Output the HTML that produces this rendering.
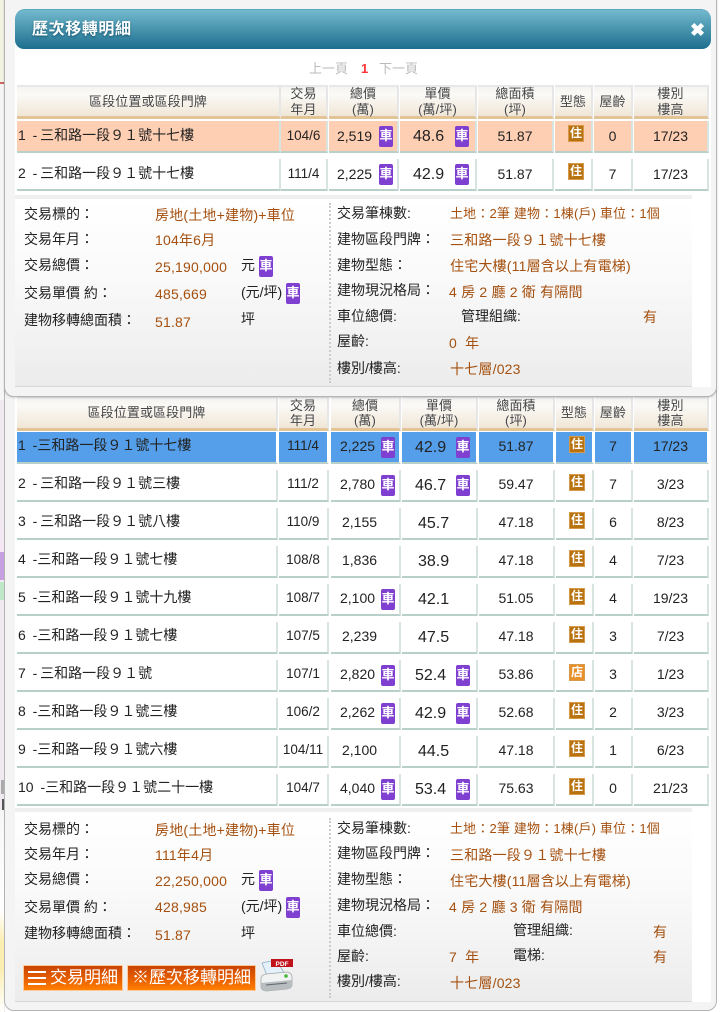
<!DOCTYPE html>
<html lang="zh-TW"><head><meta charset="utf-8"><title>歷次移轉明細</title>
<style>
*{box-sizing:border-box;margin:0;padding:0}
html,body{width:720px;height:1012px;overflow:hidden;background:#fff}
body{position:relative;font-family:"Liberation Sans","Noto Sans CJK TC",sans-serif;font-size:14px;color:#222}
.a{position:absolute;white-space:nowrap}
.dlg{position:absolute;background:#f4f4f4;border:1.5px solid #b4b4b4;border-radius:10px}
.w{position:absolute;background:#fff}
.hc,.c{position:absolute;white-space:nowrap;text-align:center}
.hc{top:0;height:100%;font-size:13px;line-height:15.5px;letter-spacing:.1px;color:#444;background:linear-gradient(#f3f3f1,#fbfaf7 25%,#f0e6d6);border-top:2px solid #e8e8e8;border-right:2px solid #e6e6e6;border-bottom:3px solid #e2c497;display:flex;align-items:center;justify-content:center;text-shadow:0 0 1px #fff}
.r{position:absolute;left:0;width:720px;height:32px}
.c{top:0;height:32px;line-height:30px;border-right:2px solid #d8e4e1;border-bottom:2px solid #b9d0ca}
.c1{text-align:left;padding-left:1px;word-spacing:3px}
.c2{font-size:13.5px}
.c3,.c4{text-align:left}
.or .c{background:#ffcfb3}
.bl .c{background:#559fea;border-right-color:#fff;border-bottom-color:#b9d0ca;color:#222}
.b{position:absolute;top:5px;width:14px;height:21px;background:#7f3fd0;color:#fff;border-radius:2px;font-size:13px;line-height:20px;text-align:center;font-weight:bold;word-spacing:0}
.h{position:absolute;top:4px;left:13px;width:16px;height:17px;background:#b8720f;color:#fff;border:1px solid #d59a4a;font-size:12px;line-height:15px;text-align:center;font-weight:bold}
.s{background:#e8902a}
.t1 .c1,.t1 .h1{left:17px;width:264px}.t1 .c2,.t1 .h2{left:281px;width:47px}.t1 .c3,.t1 .h3{left:329px;width:70px}.t1 .c4,.t1 .h4{left:400px;width:77px}.t1 .c5,.t1 .h5{left:478px;width:76px}.t1 .c6,.t1 .h6{left:555px;width:38px}.t1 .c7,.t1 .h7{left:594px;width:39px}.t1 .c8,.t1 .h8{left:634px;width:75px}
.t2 .c1,.t2 .h1{left:17px;width:261px}.t2 .c2,.t2 .h2{left:279px;width:50px}.t2 .c3,.t2 .h3{left:331px;width:70px}.t2 .c4,.t2 .h4{left:402px;width:76px}.t2 .c5,.t2 .h5{left:479px;width:76px}.t2 .c6,.t2 .h6{left:556px;width:38px}.t2 .c7,.t2 .h7{left:595px;width:38px}.t2 .c8,.t2 .h8{left:634px;width:75px}
.t1 .c3{padding-left:8px}.t1 .c4{padding-left:13px}
.t2 .c3{padding-left:9px}.t2 .c4{padding-left:13px}
.t1 .c3 .b{left:50px}.t1 .c4 .b{left:55px}
.t2 .c3 .b{left:50px}.t2 .c4 .b{left:54px}
.t2 .c3.n{padding-left:11px}.t2 .c4.n{padding-left:16px}
.t1 .c1{line-height:28px}
.t2 .c{line-height:28px}
.t2 .c1{line-height:27px}
.t1 .p,.t2 .p{font-size:16px;line-height:32px}
.det{position:absolute;left:15px;width:677px;background:linear-gradient(#fff,#fafafa 40%,#ececec);border-bottom:1px solid #d8d8d8}
.str{position:absolute;left:15px;width:677px;height:4px;background:#efefef}
.dot{position:absolute;left:329px;width:0;border-left:2px dotted #ccc}
.l{position:absolute;white-space:nowrap;line-height:20px;color:#222}
.v{position:absolute;white-space:nowrap;line-height:20px;color:#a5500f;letter-spacing:.2px}
.db{position:absolute;width:14px;height:21px;background:#7f3fd0;color:#fff;border-radius:2px;font-size:13px;line-height:20px;text-align:center;font-weight:bold}
.btn{position:absolute;top:965px;height:26px;background:linear-gradient(#c94500,#e85f00 55%,#ff8000);border:1px solid #ffc999;color:#fff;font-size:17px;line-height:24px;white-space:nowrap;text-align:center}
</style></head><body>
<!-- page background slivers -->
<div class="a" style="left:0;top:0;width:5px;height:1012px;background:#f0eaf0"></div>
<div class="a" style="left:0;top:0;width:5px;height:82px;background:#f3f3e4"></div>
<div class="a" style="left:0;top:82px;width:5px;height:2px;background:#c66"></div>
<div class="a" style="left:0;top:84px;width:5px;height:316px;background:#f6f6f6"></div>
<div class="a" style="left:0;top:510px;width:4px;height:42px;background:linear-gradient(#f0eaf0,#f6e6f6)"></div>
<div class="a" style="left:0;top:552px;width:4px;height:28px;background:#c6a0e0"></div>
<div class="a" style="left:0;top:582px;width:4px;height:18px;background:#bfe8c8"></div>
<div class="a" style="left:1px;top:780px;width:3px;height:14px;background:#aaa"></div>
<div class="a" style="left:2px;top:799px;width:2px;height:11px;background:#555"></div>
<div class="a" style="left:0;top:810px;width:4px;height:202px;background:linear-gradient(#f6f6f6,#fff 50%,#fbeeb0 65%,#fbeeb0 78%,#fff)"></div>
<!-- lower dialog -->
<div class="dlg" style="left:4px;top:380px;width:713px;height:631px"></div>
<div class="w" style="left:15px;top:397px;width:696px;height:605px"></div>
<div class="t2">
<div class="a" style="left:0;top:396px;width:720px;height:35px">
<div class="hc h1">區段位置或區段門牌</div><div class="hc h2">交易<br>年月</div><div class="hc h3">總價<br>(萬)</div><div class="hc h4">單價<br>(萬/坪)</div><div class="hc h5">總面積<br>(坪)</div><div class="hc h6">型態</div><div class="hc h7">屋齡</div><div class="hc h8">樓別<br>樓高</div>
</div>
<div class="r bl" style="top:432px"><div class="c c1">1 -三和路一段９１號十七樓</div><div class="c c2">111/4</div><div class="c c3">2,225<span class="b">車</span></div><div class="c c4 p">42.9<span class="b">車</span></div><div class="c c5">51.87</div><div class="c c6"><span class="h">住</span></div><div class="c c7">7</div><div class="c c8">17/23</div></div>
<div class="r" style="top:470px"><div class="c c1">2 -&#8201;三和路一段９１號三樓</div><div class="c c2">111/2</div><div class="c c3">2,780<span class="b">車</span></div><div class="c c4 p">46.7<span class="b">車</span></div><div class="c c5">59.47</div><div class="c c6"><span class="h">住</span></div><div class="c c7">7</div><div class="c c8">3/23</div></div>
<div class="r" style="top:508px"><div class="c c1">3 -&#8201;三和路一段９１號八樓</div><div class="c c2">110/9</div><div class="c c3 n">2,155</div><div class="c c4 p n">45.7</div><div class="c c5">47.18</div><div class="c c6"><span class="h">住</span></div><div class="c c7">6</div><div class="c c8">8/23</div></div>
<div class="r" style="top:546px"><div class="c c1">4 -三和路一段９１號七樓</div><div class="c c2">108/8</div><div class="c c3 n">1,836</div><div class="c c4 p n">38.9</div><div class="c c5">47.18</div><div class="c c6"><span class="h">住</span></div><div class="c c7">4</div><div class="c c8">7/23</div></div>
<div class="r" style="top:584px"><div class="c c1">5 -三和路一段９１號十九樓</div><div class="c c2">108/7</div><div class="c c3">2,100<span class="b">車</span></div><div class="c c4 p n">42.1</div><div class="c c5">51.05</div><div class="c c6"><span class="h">住</span></div><div class="c c7">4</div><div class="c c8">19/23</div></div>
<div class="r" style="top:622px"><div class="c c1">6 -三和路一段９１號七樓</div><div class="c c2">107/5</div><div class="c c3 n">2,239</div><div class="c c4 p n">47.5</div><div class="c c5">47.18</div><div class="c c6"><span class="h">住</span></div><div class="c c7">3</div><div class="c c8">7/23</div></div>
<div class="r" style="top:660px"><div class="c c1">7 -&#8201;三和路一段９１號</div><div class="c c2">107/1</div><div class="c c3">2,820<span class="b">車</span></div><div class="c c4 p">52.4<span class="b">車</span></div><div class="c c5">53.86</div><div class="c c6"><span class="h s">店</span></div><div class="c c7">3</div><div class="c c8">1/23</div></div>
<div class="r" style="top:698px"><div class="c c1">8 -三和路一段９１號三樓</div><div class="c c2">106/2</div><div class="c c3">2,262<span class="b">車</span></div><div class="c c4 p">42.9<span class="b">車</span></div><div class="c c5">52.68</div><div class="c c6"><span class="h">住</span></div><div class="c c7">2</div><div class="c c8">3/23</div></div>
<div class="r" style="top:736px"><div class="c c1">9 -三和路一段９１號六樓</div><div class="c c2">104/11</div><div class="c c3 n">2,100</div><div class="c c4 p n">44.5</div><div class="c c5">47.18</div><div class="c c6"><span class="h">住</span></div><div class="c c7">1</div><div class="c c8">6/23</div></div>
<div class="r" style="top:774px"><div class="c c1">10 -三和路一段９１號二十一樓</div><div class="c c2">104/7</div><div class="c c3">4,040<span class="b">車</span></div><div class="c c4 p">53.4<span class="b">車</span></div><div class="c c5">75.63</div><div class="c c6"><span class="h">住</span></div><div class="c c7">0</div><div class="c c8">21/23</div></div>
</div>
<div class="str" style="top:808px"></div>
<div class="det" style="top:812px;height:190px"></div>
<div class="dot" style="top:818px;height:180px"></div>
<div class="l" style="left:24px;top:819px">交易標的：</div><div class="v" style="left:155px;top:820px">房地(土地+建物)+車位</div>
<div class="l" style="left:24px;top:844px">交易年月：</div><div class="v" style="left:155px;top:845px">111年4月</div>
<div class="l" style="left:24px;top:869px">交易總價：</div><div class="v" style="left:155px;top:871px">22,250,000</div><div class="l" style="left:241px;top:869px">元</div><div class="db" style="left:259px;top:870px">車</div>
<div class="l" style="left:24px;top:897px">交易單價 約：</div><div class="v" style="left:155px;top:897px">428,985</div><div class="l" style="left:241px;top:896px">(元/坪)</div><div class="db" style="left:286px;top:897px">車</div>
<div class="l" style="left:24px;top:923px">建物移轉總面積：</div><div class="v" style="left:155px;top:925px">51.87</div><div class="l" style="left:241px;top:923px">坪</div>
<div class="btn" style="left:23px;width:100px"><span style="display:inline-block;width:18px;height:14px;margin-right:4px;vertical-align:-2px;background:repeating-linear-gradient(#fff 0 2px,transparent 2px 6px)"></span>交易明細</div>
<div class="btn" style="left:127px;width:129px">※歷次移轉明細</div>
<svg class="a" style="left:259px;top:958px" width="36" height="35" viewBox="0 0 36 35">
<path d="M3 5 L17 2 L26 16 L9 20 Z" fill="#e4f1fa" stroke="#8fb0c4" stroke-width=".8"/>
<rect x="12" y="1" width="22" height="8" fill="#c1121c"/><text x="23" y="8" font-size="6.5" font-weight="bold" fill="#fff" text-anchor="middle" font-family="Liberation Sans">PDF</text>
<path d="M2 21 Q2 17 7 16 L28 14 Q33 15 33 19 L33 27 Q33 30 28 31 L8 33 Q2 33 2 28 Z" fill="#f1f2f2" stroke="#a0a6a8" stroke-width=".8"/>
<path d="M2 25 L33 22 L33 27 Q33 30 28 31 L8 33 Q2 33 2 28 Z" fill="#b8bdc0"/>
<path d="M7 27 L28 25" stroke="#60666a" stroke-width="1"/>
<circle cx="27" cy="18" r="1.8" fill="#46b83c"/>
</svg>
<div class="l" style="left:337px;top:818px">交易筆棟數:</div><div class="v" style="left:450px;top:819px;font-size:13px;letter-spacing:.17px">土地：2筆 建物：1棟(戶) 車位：1個</div>
<div class="l" style="left:337px;top:843px">建物區段門牌：</div><div class="v" style="left:450px;top:845px">三和路一段９１號十七樓</div>
<div class="l" style="left:337px;top:869px">建物型態：</div><div class="v" style="left:450px;top:871px">住宅大樓(11層含以上有電梯)</div>
<div class="l" style="left:337px;top:895px">建物現況格局：</div><div class="v" style="left:449px;top:897px">4 房 2 廳 3 衛 有隔間</div>
<div class="l" style="left:337px;top:921px">車位總價:</div><div class="l" style="left:513px;top:920px">管理組織:</div><div class="v" style="left:653px;top:922px">有</div>
<div class="l" style="left:337px;top:946px">屋齡:</div><div class="v" style="left:449px;top:947px">7 &nbsp;年</div><div class="l" style="left:513px;top:945px">電梯:</div><div class="v" style="left:653px;top:947px">有</div>
<div class="l" style="left:337px;top:971px">樓別/樓高:</div><div class="v" style="left:450px;top:973px">十七層/023</div>
<!-- upper dialog -->
<div class="dlg" style="left:4px;top:-12px;width:713px;height:409px;box-shadow:0 1px 2px rgba(0,0,0,.15)"></div>
<div class="w" style="left:15px;top:40px;width:696px;height:347px"></div>
<div class="a" style="left:15px;top:9px;width:696px;height:40px;border-radius:10px 10px 9px 9px;background:linear-gradient(#72b9cd,#1d6e8e);border-top:1px solid #5aa6bc"></div>
<div class="a" style="left:32px;top:19px;font-size:16px;line-height:22px;font-weight:bold;color:#fff;text-shadow:0 1px 2px #14566f;letter-spacing:.6px">歷次移轉明細</div>
<div class="a" style="left:690px;top:18px;font-size:18px;line-height:24px;font-weight:bold;color:#fff">✖</div>
<div class="a" style="left:309px;top:59px;font-size:13px;line-height:20px;color:#bbb">上一頁</div>
<div class="a" style="left:361px;top:59px;font-size:13px;line-height:20px;color:#f33;font-weight:bold">1</div>
<div class="a" style="left:379px;top:59px;font-size:13px;line-height:20px;color:#bbb">下一頁</div>
<div class="t1">
<div class="a" style="left:0;top:85px;width:720px;height:34px">
<div class="hc h1">區段位置或區段門牌</div><div class="hc h2">交易<br>年月</div><div class="hc h3">總價<br>(萬)</div><div class="hc h4">單價<br>(萬/坪)</div><div class="hc h5">總面積<br>(坪)</div><div class="hc h6">型態</div><div class="hc h7">屋齡</div><div class="hc h8">樓別<br>樓高</div>
</div>
<div class="r or" style="top:121px"><div class="c c1">1 -&#8201;三和路一段９１號十七樓</div><div class="c c2">104/6</div><div class="c c3">2,519<span class="b">車</span></div><div class="c c4 p">48.6<span class="b">車</span></div><div class="c c5">51.87</div><div class="c c6"><span class="h">住</span></div><div class="c c7">0</div><div class="c c8">17/23</div></div>
<div class="r" style="top:159px"><div class="c c1">2 -&#8201;三和路一段９１號十七樓</div><div class="c c2">111/4</div><div class="c c3">2,225<span class="b">車</span></div><div class="c c4 p">42.9<span class="b">車</span></div><div class="c c5">51.87</div><div class="c c6"><span class="h">住</span></div><div class="c c7">7</div><div class="c c8">17/23</div></div>
</div>
<div class="str" style="top:195px"></div>
<div class="det" style="top:199px;height:188px"></div>
<div class="dot" style="top:203px;height:180px"></div>
<div class="l" style="left:24px;top:204px">交易標的：</div><div class="v" style="left:155px;top:205px">房地(土地+建物)+車位</div>
<div class="l" style="left:24px;top:229px">交易年月：</div><div class="v" style="left:155px;top:230px">104年6月</div>
<div class="l" style="left:24px;top:255px">交易總價：</div><div class="v" style="left:155px;top:257px">25,190,000</div><div class="l" style="left:241px;top:255px">元</div><div class="db" style="left:259px;top:256px">車</div>
<div class="l" style="left:24px;top:283px">交易單價 約：</div><div class="v" style="left:155px;top:284px">485,669</div><div class="l" style="left:241px;top:282px">(元/坪)</div><div class="db" style="left:286px;top:283px">車</div>
<div class="l" style="left:24px;top:310px">建物移轉總面積：</div><div class="v" style="left:155px;top:312px">51.87</div><div class="l" style="left:241px;top:309px">坪</div>
<div class="l" style="left:337px;top:203px">交易筆棟數:</div><div class="v" style="left:450px;top:204px;font-size:13px;letter-spacing:.17px">土地：2筆 建物：1棟(戶) 車位：1個</div>
<div class="l" style="left:337px;top:229px">建物區段門牌：</div><div class="v" style="left:450px;top:230px">三和路一段９１號十七樓</div>
<div class="l" style="left:337px;top:255px">建物型態：</div><div class="v" style="left:450px;top:256px">住宅大樓(11層含以上有電梯)</div>
<div class="l" style="left:337px;top:280px">建物現況格局：</div><div class="v" style="left:449px;top:282px">4 房 2 廳 2 衛 有隔間</div>
<div class="l" style="left:337px;top:306px">車位總價:</div><div class="l" style="left:461px;top:306px">管理組織:</div><div class="v" style="left:643px;top:307px">有</div>
<div class="l" style="left:337px;top:331px">屋齡:</div><div class="v" style="left:449px;top:333px">0 &nbsp;年</div>
<div class="l" style="left:337px;top:358px">樓別/樓高:</div><div class="v" style="left:450px;top:359px">十七層/023</div>
</body></html>
